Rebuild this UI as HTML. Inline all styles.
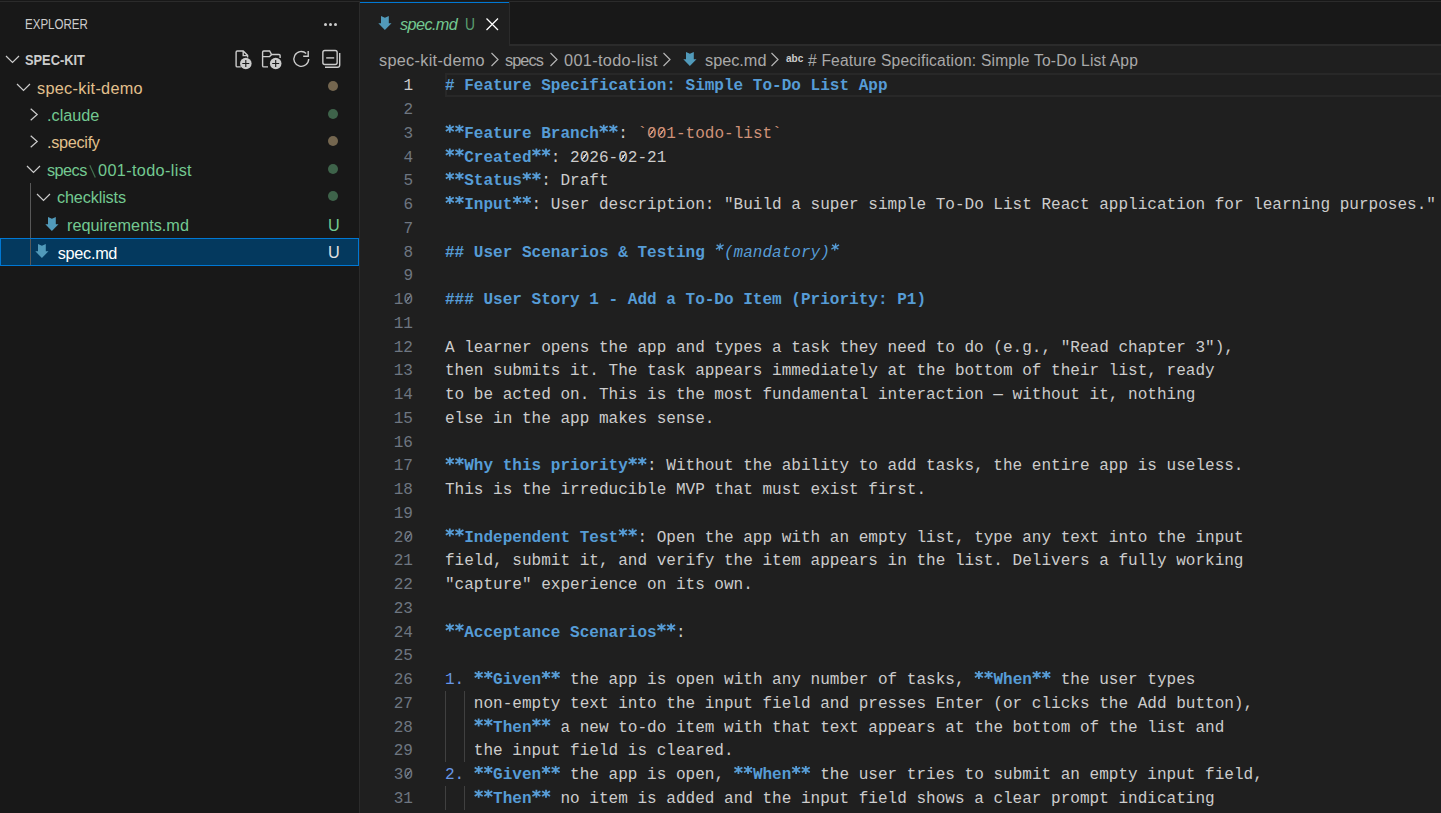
<!DOCTYPE html>
<html><head><meta charset="utf-8">
<style>
*{box-sizing:border-box}
html,body{margin:0;padding:0;width:1441px;height:813px;overflow:hidden;background:#181818}
body{position:relative;font-family:"Liberation Sans",sans-serif}
.abs{position:absolute}
#topline{position:absolute;left:0;top:1px;width:1441px;height:1px;background:#2b2b2b}
#sidebar{position:absolute;left:0;top:2px;width:359px;height:811px;background:#181818}
#sbborder{position:absolute;left:359px;top:2px;width:1px;height:811px;background:#2b2b2b}
.ui{position:absolute;white-space:pre;font-family:"Liberation Sans",sans-serif;font-size:16.25px;line-height:20px}
#editor{position:absolute;left:360px;top:46px;width:1081px;height:767px;background:#1f1f1f}
#tabbar{position:absolute;left:360px;top:2px;width:1081px;height:44px;background:#181818}
#tabbarborder{position:absolute;left:360px;top:44px;width:1081px;height:2px;background:#2b2b2b}
#tab{position:absolute;left:360px;top:1px;width:149px;height:45px;background:#1f1f1f}
#tabtop{position:absolute;left:360px;top:2px;width:149px;height:1px;background:#0078d4}
#tabright{position:absolute;left:509px;top:1px;width:1px;height:45px;background:#2b2b2b}
.cl,.ln{position:absolute;white-space:pre;font-family:"Liberation Mono",monospace;font-size:16.05px;line-height:23.75px;height:23.75px}
.cl{left:445px;color:#cccccc}
.ln{left:363px;width:50px;text-align:right;color:#6e7681}
.ln.act{color:#cccccc}
.h{color:#569cd6;font-weight:bold}
.b{color:#569cd6;font-weight:bold}
.i{color:#569cd6;font-style:italic}
.c{color:#ce9178}
.n{color:#6796e6}
.t{color:#cccccc}
.ig{position:absolute;width:1px;background:#404040}
.z{background:linear-gradient(to bottom right,transparent 42%,currentColor 42%,currentColor 58%,transparent 58%) no-repeat;background-size:5px 7px;background-position:2.4px 4.4px}
</style></head><body>
<div id="topline"></div>
<div id="sidebar"></div>
<div id="sbborder"></div>

<!-- explorer header -->
<div class="ui" style="left:25px;top:15px;font-size:13.75px;transform:scaleX(0.84);transform-origin:0 0;color:#cccccc">EXPLORER</div>
<div class="abs" style="left:323.9px;top:22.5px;width:3px;height:3px;border-radius:2px;background:#cccccc"></div>
<div class="abs" style="left:329px;top:22.5px;width:3px;height:3px;border-radius:2px;background:#cccccc"></div>
<div class="abs" style="left:333.9px;top:22.5px;width:3px;height:3px;border-radius:2px;background:#cccccc"></div>

<!-- section header -->
<svg class="abs" style="left:5px;top:55px" width="15" height="9" viewBox="0 0 15 9"><path d="M1 1 L7.5 7.5 L14 1" fill="none" stroke="#cccccc" stroke-width="1.2"/></svg>
<div class="ui" style="left:25px;top:50px;font-size:14px;transform:scaleX(0.915);transform-origin:0 0;font-weight:bold;color:#cccccc">SPEC-KIT</div>

<!-- action icons -->
<svg class="abs" style="left:225px;top:40px" width="125" height="40" viewBox="225 40 125 40" fill="none" stroke="#cccccc" stroke-width="1.4">
 <path d="M240.8 66.9 H237.3 Q236.1 66.9 236.1 65.7 V52.2 Q236.1 51 237.3 51 H243.2 L247.6 55.4 V57.6"/>
 <path d="M243.2 51 V55.6 H247.6"/>
 <circle cx="245.8" cy="63.5" r="5.8" fill="#cccccc" stroke="none"/>
 <path d="M242.3 63.5 H249.3 M245.8 60 V67" stroke="#181818" stroke-width="1.1"/>
 <path d="M268 66.9 H263.8 Q262.6 66.9 262.6 65.7 V52.2 Q262.6 51 263.8 51 H269.6 L271.6 54.5 H279 Q280.1 54.5 280.1 55.6 V58"/>
 <path d="M262.6 56.6 H269.6 L271.6 54.5"/>
 <circle cx="275.7" cy="63.5" r="5.8" fill="#cccccc" stroke="none"/>
 <path d="M272.2 63.5 H279.2 M275.7 60 V67" stroke="#181818" stroke-width="1.1"/>
 <path d="M308.7 59 A7.4 7.4 0 1 1 306.2 53.4" stroke-width="1.4"/>
 <path d="M308.2 51 V56.3 H303.2" stroke-width="1.4"/>
 <rect x="322.85" y="50.55" width="14.3" height="13.9" rx="2" stroke-width="1.4"/>
 <path d="M325 67.2 H337.5 Q339.7 67.2 339.7 65 V53" stroke-width="1.4"/>
 <path d="M326.2 57.9 H334.2" stroke-width="1.4"/>
</svg>

<!-- tree -->
<!-- row: spec-kit-demo -->
<svg class="abs" style="left:16px;top:83px" width="15" height="9" viewBox="0 0 15 9"><path d="M1 1 L7.5 7.5 L14 1" fill="none" stroke="#cccccc" stroke-width="1.2"/></svg>
<div class="ui" style="left:37px;top:78px;letter-spacing:0.3px;color:#e2c08d">spec-kit-demo</div>
<div class="abs" style="left:327.5px;top:81.10px;width:10px;height:10px;border-radius:50%;background:#74664f"></div>
<!-- .claude -->
<svg class="abs" style="left:29.2px;top:106.5px" width="10" height="15" viewBox="0 0 10 15"><path d="M1.7 1.7 L8.2 7.5 L1.7 13.3" fill="none" stroke="#cccccc" stroke-width="1.2"/></svg>
<div class="ui" style="left:47px;top:105px;color:#73c991">.claude</div>
<div class="abs" style="left:327.5px;top:108.65px;width:10px;height:10px;border-radius:50%;background:#3e634a"></div>
<!-- .specify -->
<svg class="abs" style="left:29.2px;top:134px" width="10" height="15" viewBox="0 0 10 15"><path d="M1.7 1.7 L8.2 7.5 L1.7 13.3" fill="none" stroke="#cccccc" stroke-width="1.2"/></svg>
<div class="ui" style="left:47px;top:132px;letter-spacing:-0.3px;color:#e2c08d">.specify</div>
<div class="abs" style="left:327.5px;top:136.20px;width:10px;height:10px;border-radius:50%;background:#74664f"></div>
<!-- specs\001-todo-list -->
<svg class="abs" style="left:26px;top:165px" width="15" height="9" viewBox="0 0 15 9"><path d="M1 1 L7.5 7.5 L14 1" fill="none" stroke="#cccccc" stroke-width="1.2"/></svg>
<div class="ui" style="left:47px;top:160px;letter-spacing:-0.55px;color:#73c991">specs</div>
<svg class="abs" style="left:85px;top:160px" width="15" height="22" viewBox="85 160 15 22"><path d="M89.8 165.3 L95.3 177.4" stroke="#437150" stroke-width="1.2"/></svg>
<div class="ui" style="left:98px;top:160px;letter-spacing:0.35px;color:#73c991">001-todo-list</div>
<div class="abs" style="left:327.5px;top:163.75px;width:10px;height:10px;border-radius:50%;background:#3e634a"></div>
<!-- indent guide -->
<div class="abs" style="left:30px;top:183px;width:1px;height:83px;background:#585858"></div>
<!-- checklists -->
<svg class="abs" style="left:36px;top:193px" width="15" height="9" viewBox="0 0 15 9"><path d="M1 1 L7.5 7.5 L14 1" fill="none" stroke="#cccccc" stroke-width="1.2"/></svg>
<div class="ui" style="left:57px;top:187px;letter-spacing:-0.15px;color:#73c991">checklists</div>
<div class="abs" style="left:327.5px;top:191.30px;width:10px;height:10px;border-radius:50%;background:#3e634a"></div>
<!-- requirements.md -->
<svg class="abs" style="left:45px;top:217px" width="14" height="15" viewBox="0 0 14 15"><path d="M3 0 L6.9 1.8 L10.8 0 L10.8 7.3 L13.5 7.3 L6.9 14 L0.3 7.3 L3 7.3 Z" fill="#519aba"/></svg>
<div class="ui" style="left:67px;top:215px;color:#73c991">requirements.md</div>
<div class="ui" style="left:328px;top:215px;color:#73c991">U</div>
<!-- spec.md selected -->
<div class="abs" style="left:0;top:238px;width:359px;height:28px;background:#04395e;border:1px solid #0078d4"></div>
<div class="abs" style="left:30px;top:239px;width:1px;height:26px;background:#585858"></div>
<svg class="abs" style="left:35px;top:244px" width="14" height="15" viewBox="0 0 14 15"><path d="M3 0 L6.9 1.8 L10.8 0 L10.8 7.3 L13.5 7.3 L6.9 14 L0.3 7.3 L3 7.3 Z" fill="#519aba"/></svg>
<div class="ui" style="left:57.8px;top:243px;letter-spacing:-0.3px;color:#ffffff">spec.md</div>
<div class="ui" style="left:328px;top:242px;color:#e0e0e0">U</div>

<!-- tab bar -->
<div id="tabbar"></div>
<div id="tabbarborder"></div>
<div id="tab"></div>
<div id="tabtop"></div>
<div id="tabright"></div>
<svg class="abs" style="left:377.6px;top:16px" width="14" height="15" viewBox="0 0 14 15"><path d="M3 0 L6.9 1.8 L10.8 0 L10.8 7.3 L13.5 7.3 L6.9 14 L0.3 7.3 L3 7.3 Z" fill="#519aba"/></svg>
<div class="ui" style="left:400px;top:14px;letter-spacing:-0.6px;color:#73c991;font-style:italic">spec.md</div>
<div class="ui" style="left:465px;top:14px;transform:scaleX(0.85);transform-origin:0 0;color:#5a9e70">U</div>
<svg class="abs" style="left:485px;top:17px" width="15" height="15" viewBox="0 0 15 15"><path d="M1.5 1.5 L13 13 M13 1.5 L1.5 13" stroke="#ffffff" stroke-width="1.25"/></svg>

<!-- editor -->
<div id="editor"></div>
<!-- breadcrumbs -->
<div class="ui" style="left:379px;top:50px;letter-spacing:0.3px;color:#a9a9a9">spec-kit-demo</div>
<svg class="abs" style="left:489.8px;top:52px" width="10" height="15" viewBox="0 0 10 15"><path d="M1.5 1 L8 7.5 L1.5 14" fill="none" stroke="#b5b5b5" stroke-width="1.2"/></svg>
<div class="ui" style="left:505px;top:50px;letter-spacing:-0.9px;color:#a9a9a9">specs</div>
<svg class="abs" style="left:548.8px;top:52px" width="10" height="15" viewBox="0 0 10 15"><path d="M1.5 1 L8 7.5 L1.5 14" fill="none" stroke="#b5b5b5" stroke-width="1.2"/></svg>
<div class="ui" style="left:564px;top:50px;letter-spacing:0.35px;color:#a9a9a9">001-todo-list</div>
<svg class="abs" style="left:661.8px;top:52px" width="10" height="15" viewBox="0 0 10 15"><path d="M1.5 1 L8 7.5 L1.5 14" fill="none" stroke="#b5b5b5" stroke-width="1.2"/></svg>
<svg class="abs" style="left:683px;top:52px" width="14" height="15" viewBox="0 0 14 15"><path d="M3 0 L6.9 1.8 L10.8 0 L10.8 7.3 L13.5 7.3 L6.9 14 L0.3 7.3 L3 7.3 Z" fill="#519aba"/></svg>
<div class="ui" style="left:705px;top:50px;color:#a9a9a9">spec.md</div>
<svg class="abs" style="left:769.8px;top:52px" width="10" height="15" viewBox="0 0 10 15"><path d="M1.5 1 L8 7.5 L1.5 14" fill="none" stroke="#b5b5b5" stroke-width="1.2"/></svg>
<div class="ui" style="left:786px;top:49px;font-size:10px;font-weight:bold;color:#cccccc">abc</div>
<div class="ui" style="left:808px;top:50.5px;font-size:15.6px;letter-spacing:0.19px;color:#a9a9a9"># Feature Specification: Simple To-Do List App</div>

<!-- current line box -->
<div class="abs" style="left:445px;top:73px;width:996px;height:24px;border:2px solid #282828;border-right:none"></div>

<div class="ig" style="left:445px;top:690.75px;height:71.25px"></div>
<div class="ig" style="left:464.24px;top:690.75px;height:71.25px"></div>
<div class="ig" style="left:445px;top:785.75px;height:23.75px"></div>
<div class="ig" style="left:464.24px;top:785.75px;height:23.75px"></div>
<div class="ln act" style="top:75.25px">1</div>
<div class="cl" style="top:75.25px"><span class="h"># Feature Specification: Simple To-Do List App</span></div>
<div class="ln" style="top:99.00px">2</div>
<div class="ln" style="top:122.75px">3</div>
<div class="cl" style="top:122.75px"><span class="b">  Feature Branch  </span><span class="t">: </span><span class="c">`<span class=z>0</span><span class=z>0</span>1-todo-list`</span></div>
<div class="ln" style="top:146.50px">4</div>
<div class="cl" style="top:146.50px"><span class="b">  Created  </span><span class="t">: 2<span class=z>0</span>26-<span class=z>0</span>2-21</span></div>
<div class="ln" style="top:170.25px">5</div>
<div class="cl" style="top:170.25px"><span class="b">  Status  </span><span class="t">: Draft</span></div>
<div class="ln" style="top:194.00px">6</div>
<div class="cl" style="top:194.00px"><span class="b">  Input  </span><span class="t">: User description: "Build a super simple To-Do List React application for learning purposes."</span></div>
<div class="ln" style="top:217.75px">7</div>
<div class="ln" style="top:241.50px">8</div>
<div class="cl" style="top:241.50px"><span class="h">## User Scenarios &amp; Testing </span><span class="i"> (mandatory) </span></div>
<div class="ln" style="top:265.25px">9</div>
<div class="ln" style="top:289.00px">1<span class=z>0</span></div>
<div class="cl" style="top:289.00px"><span class="h">### User Story 1 - Add a To-Do Item (Priority: P1)</span></div>
<div class="ln" style="top:312.75px">11</div>
<div class="ln" style="top:336.50px">12</div>
<div class="cl" style="top:336.50px"><span class="t">A learner opens the app and types a task they need to do (e.g., "Read chapter 3"),</span></div>
<div class="ln" style="top:360.25px">13</div>
<div class="cl" style="top:360.25px"><span class="t">then submits it. The task appears immediately at the bottom of their list, ready</span></div>
<div class="ln" style="top:384.00px">14</div>
<div class="cl" style="top:384.00px"><span class="t">to be acted on. This is the most fundamental interaction — without it, nothing</span></div>
<div class="ln" style="top:407.75px">15</div>
<div class="cl" style="top:407.75px"><span class="t">else in the app makes sense.</span></div>
<div class="ln" style="top:431.50px">16</div>
<div class="ln" style="top:455.25px">17</div>
<div class="cl" style="top:455.25px"><span class="b">  Why this priority  </span><span class="t">: Without the ability to add tasks, the entire app is useless.</span></div>
<div class="ln" style="top:479.00px">18</div>
<div class="cl" style="top:479.00px"><span class="t">This is the irreducible MVP that must exist first.</span></div>
<div class="ln" style="top:502.75px">19</div>
<div class="ln" style="top:526.50px">2<span class=z>0</span></div>
<div class="cl" style="top:526.50px"><span class="b">  Independent Test  </span><span class="t">: Open the app with an empty list, type any text into the input</span></div>
<div class="ln" style="top:550.25px">21</div>
<div class="cl" style="top:550.25px"><span class="t">field, submit it, and verify the item appears in the list. Delivers a fully working</span></div>
<div class="ln" style="top:574.00px">22</div>
<div class="cl" style="top:574.00px"><span class="t">"capture" experience on its own.</span></div>
<div class="ln" style="top:597.75px">23</div>
<div class="ln" style="top:621.50px">24</div>
<div class="cl" style="top:621.50px"><span class="b">  Acceptance Scenarios  </span><span class="t">:</span></div>
<div class="ln" style="top:645.25px">25</div>
<div class="ln" style="top:669.00px">26</div>
<div class="cl" style="top:669.00px"><span class="n">1. </span><span class="b">  Given  </span><span class="t"> the app is open with any number of tasks, </span><span class="b">  When  </span><span class="t"> the user types</span></div>
<div class="ln" style="top:692.75px">27</div>
<div class="cl" style="top:692.75px"><span class="t">   non-empty text into the input field and presses Enter (or clicks the Add button),</span></div>
<div class="ln" style="top:716.50px">28</div>
<div class="cl" style="top:716.50px"><span class="t">   </span><span class="b">  Then  </span><span class="t"> a new to-do item with that text appears at the bottom of the list and</span></div>
<div class="ln" style="top:740.25px">29</div>
<div class="cl" style="top:740.25px"><span class="t">   the input field is cleared.</span></div>
<div class="ln" style="top:764.00px">3<span class=z>0</span></div>
<div class="cl" style="top:764.00px"><span class="n">2. </span><span class="b">  Given  </span><span class="t"> the app is open, </span><span class="b">  When  </span><span class="t"> the user tries to submit an empty input field,</span></div>
<div class="ln" style="top:787.75px">31</div>
<div class="cl" style="top:787.75px"><span class="t">   </span><span class="b">  Then  </span><span class="t"> no item is added and the input field shows a clear prompt indicating</span></div>
<svg class="abs" style="left:0;top:0" width="1441" height="813" viewBox="0 0 1441 813" fill="none" stroke-linecap="butt">
<path d="M449.81 124.65 L449.81 132.65 M445.81 126.25 L453.81 131.05 M453.81 126.25 L445.81 131.05" stroke="#569cd6" stroke-width="1.8"/>
<path d="M459.43 124.65 L459.43 132.65 M455.43 126.25 L463.43 131.05 M463.43 126.25 L455.43 131.05" stroke="#569cd6" stroke-width="1.8"/>
<path d="M603.73 124.65 L603.73 132.65 M599.73 126.25 L607.73 131.05 M607.73 126.25 L599.73 131.05" stroke="#569cd6" stroke-width="1.8"/>
<path d="M613.35 124.65 L613.35 132.65 M609.35 126.25 L617.35 131.05 M617.35 126.25 L609.35 131.05" stroke="#569cd6" stroke-width="1.8"/>
<path d="M449.81 148.40 L449.81 156.40 M445.81 150.00 L453.81 154.80 M453.81 150.00 L445.81 154.80" stroke="#569cd6" stroke-width="1.8"/>
<path d="M459.43 148.40 L459.43 156.40 M455.43 150.00 L463.43 154.80 M463.43 150.00 L455.43 154.80" stroke="#569cd6" stroke-width="1.8"/>
<path d="M536.39 148.40 L536.39 156.40 M532.39 150.00 L540.39 154.80 M540.39 150.00 L532.39 154.80" stroke="#569cd6" stroke-width="1.8"/>
<path d="M546.01 148.40 L546.01 156.40 M542.01 150.00 L550.01 154.80 M550.01 150.00 L542.01 154.80" stroke="#569cd6" stroke-width="1.8"/>
<path d="M449.81 172.15 L449.81 180.15 M445.81 173.75 L453.81 178.55 M453.81 173.75 L445.81 178.55" stroke="#569cd6" stroke-width="1.8"/>
<path d="M459.43 172.15 L459.43 180.15 M455.43 173.75 L463.43 178.55 M463.43 173.75 L455.43 178.55" stroke="#569cd6" stroke-width="1.8"/>
<path d="M526.77 172.15 L526.77 180.15 M522.77 173.75 L530.77 178.55 M530.77 173.75 L522.77 178.55" stroke="#569cd6" stroke-width="1.8"/>
<path d="M536.39 172.15 L536.39 180.15 M532.39 173.75 L540.39 178.55 M540.39 173.75 L532.39 178.55" stroke="#569cd6" stroke-width="1.8"/>
<path d="M449.81 195.90 L449.81 203.90 M445.81 197.50 L453.81 202.30 M453.81 197.50 L445.81 202.30" stroke="#569cd6" stroke-width="1.8"/>
<path d="M459.43 195.90 L459.43 203.90 M455.43 197.50 L463.43 202.30 M463.43 197.50 L455.43 202.30" stroke="#569cd6" stroke-width="1.8"/>
<path d="M517.15 195.90 L517.15 203.90 M513.15 197.50 L521.15 202.30 M521.15 197.50 L513.15 202.30" stroke="#569cd6" stroke-width="1.8"/>
<path d="M526.77 195.90 L526.77 203.90 M522.77 197.50 L530.77 202.30 M530.77 197.50 L522.77 202.30" stroke="#569cd6" stroke-width="1.8"/>
<path d="M720.37 243.48 L719.17 250.52 M716.61 244.89 L722.93 249.11 M723.65 244.89 L715.89 249.11" stroke="#569cd6" stroke-width="1.25"/>
<path d="M835.81 243.48 L834.61 250.52 M832.05 244.89 L838.37 249.11 M839.09 244.89 L831.33 249.11" stroke="#569cd6" stroke-width="1.25"/>
<path d="M449.81 457.15 L449.81 465.15 M445.81 458.75 L453.81 463.55 M453.81 458.75 L445.81 463.55" stroke="#569cd6" stroke-width="1.8"/>
<path d="M459.43 457.15 L459.43 465.15 M455.43 458.75 L463.43 463.55 M463.43 458.75 L455.43 463.55" stroke="#569cd6" stroke-width="1.8"/>
<path d="M632.59 457.15 L632.59 465.15 M628.59 458.75 L636.59 463.55 M636.59 458.75 L628.59 463.55" stroke="#569cd6" stroke-width="1.8"/>
<path d="M642.21 457.15 L642.21 465.15 M638.21 458.75 L646.21 463.55 M646.21 458.75 L638.21 463.55" stroke="#569cd6" stroke-width="1.8"/>
<path d="M449.81 528.40 L449.81 536.40 M445.81 530.00 L453.81 534.80 M453.81 530.00 L445.81 534.80" stroke="#569cd6" stroke-width="1.8"/>
<path d="M459.43 528.40 L459.43 536.40 M455.43 530.00 L463.43 534.80 M463.43 530.00 L455.43 534.80" stroke="#569cd6" stroke-width="1.8"/>
<path d="M622.97 528.40 L622.97 536.40 M618.97 530.00 L626.97 534.80 M626.97 530.00 L618.97 534.80" stroke="#569cd6" stroke-width="1.8"/>
<path d="M632.59 528.40 L632.59 536.40 M628.59 530.00 L636.59 534.80 M636.59 530.00 L628.59 534.80" stroke="#569cd6" stroke-width="1.8"/>
<path d="M449.81 623.40 L449.81 631.40 M445.81 625.00 L453.81 629.80 M453.81 625.00 L445.81 629.80" stroke="#569cd6" stroke-width="1.8"/>
<path d="M459.43 623.40 L459.43 631.40 M455.43 625.00 L463.43 629.80 M463.43 625.00 L455.43 629.80" stroke="#569cd6" stroke-width="1.8"/>
<path d="M661.45 623.40 L661.45 631.40 M657.45 625.00 L665.45 629.80 M665.45 625.00 L657.45 629.80" stroke="#569cd6" stroke-width="1.8"/>
<path d="M671.07 623.40 L671.07 631.40 M667.07 625.00 L675.07 629.80 M675.07 625.00 L667.07 629.80" stroke="#569cd6" stroke-width="1.8"/>
<path d="M478.67 670.90 L478.67 678.90 M474.67 672.50 L482.67 677.30 M482.67 672.50 L474.67 677.30" stroke="#569cd6" stroke-width="1.8"/>
<path d="M488.29 670.90 L488.29 678.90 M484.29 672.50 L492.29 677.30 M492.29 672.50 L484.29 677.30" stroke="#569cd6" stroke-width="1.8"/>
<path d="M546.01 670.90 L546.01 678.90 M542.01 672.50 L550.01 677.30 M550.01 672.50 L542.01 677.30" stroke="#569cd6" stroke-width="1.8"/>
<path d="M555.63 670.90 L555.63 678.90 M551.63 672.50 L559.63 677.30 M559.63 672.50 L551.63 677.30" stroke="#569cd6" stroke-width="1.8"/>
<path d="M978.91 670.90 L978.91 678.90 M974.91 672.50 L982.91 677.30 M982.91 672.50 L974.91 677.30" stroke="#569cd6" stroke-width="1.8"/>
<path d="M988.53 670.90 L988.53 678.90 M984.53 672.50 L992.53 677.30 M992.53 672.50 L984.53 677.30" stroke="#569cd6" stroke-width="1.8"/>
<path d="M1036.63 670.90 L1036.63 678.90 M1032.63 672.50 L1040.63 677.30 M1040.63 672.50 L1032.63 677.30" stroke="#569cd6" stroke-width="1.8"/>
<path d="M1046.25 670.90 L1046.25 678.90 M1042.25 672.50 L1050.25 677.30 M1050.25 672.50 L1042.25 677.30" stroke="#569cd6" stroke-width="1.8"/>
<path d="M478.67 718.40 L478.67 726.40 M474.67 720.00 L482.67 724.80 M482.67 720.00 L474.67 724.80" stroke="#569cd6" stroke-width="1.8"/>
<path d="M488.29 718.40 L488.29 726.40 M484.29 720.00 L492.29 724.80 M492.29 720.00 L484.29 724.80" stroke="#569cd6" stroke-width="1.8"/>
<path d="M536.39 718.40 L536.39 726.40 M532.39 720.00 L540.39 724.80 M540.39 720.00 L532.39 724.80" stroke="#569cd6" stroke-width="1.8"/>
<path d="M546.01 718.40 L546.01 726.40 M542.01 720.00 L550.01 724.80 M550.01 720.00 L542.01 724.80" stroke="#569cd6" stroke-width="1.8"/>
<path d="M478.67 765.90 L478.67 773.90 M474.67 767.50 L482.67 772.30 M482.67 767.50 L474.67 772.30" stroke="#569cd6" stroke-width="1.8"/>
<path d="M488.29 765.90 L488.29 773.90 M484.29 767.50 L492.29 772.30 M492.29 767.50 L484.29 772.30" stroke="#569cd6" stroke-width="1.8"/>
<path d="M546.01 765.90 L546.01 773.90 M542.01 767.50 L550.01 772.30 M550.01 767.50 L542.01 772.30" stroke="#569cd6" stroke-width="1.8"/>
<path d="M555.63 765.90 L555.63 773.90 M551.63 767.50 L559.63 772.30 M559.63 767.50 L551.63 772.30" stroke="#569cd6" stroke-width="1.8"/>
<path d="M738.41 765.90 L738.41 773.90 M734.41 767.50 L742.41 772.30 M742.41 767.50 L734.41 772.30" stroke="#569cd6" stroke-width="1.8"/>
<path d="M748.03 765.90 L748.03 773.90 M744.03 767.50 L752.03 772.30 M752.03 767.50 L744.03 772.30" stroke="#569cd6" stroke-width="1.8"/>
<path d="M796.13 765.90 L796.13 773.90 M792.13 767.50 L800.13 772.30 M800.13 767.50 L792.13 772.30" stroke="#569cd6" stroke-width="1.8"/>
<path d="M805.75 765.90 L805.75 773.90 M801.75 767.50 L809.75 772.30 M809.75 767.50 L801.75 772.30" stroke="#569cd6" stroke-width="1.8"/>
<path d="M478.67 789.65 L478.67 797.65 M474.67 791.25 L482.67 796.05 M482.67 791.25 L474.67 796.05" stroke="#569cd6" stroke-width="1.8"/>
<path d="M488.29 789.65 L488.29 797.65 M484.29 791.25 L492.29 796.05 M492.29 791.25 L484.29 796.05" stroke="#569cd6" stroke-width="1.8"/>
<path d="M536.39 789.65 L536.39 797.65 M532.39 791.25 L540.39 796.05 M540.39 791.25 L532.39 796.05" stroke="#569cd6" stroke-width="1.8"/>
<path d="M546.01 789.65 L546.01 797.65 M542.01 791.25 L550.01 796.05 M550.01 791.25 L542.01 796.05" stroke="#569cd6" stroke-width="1.8"/>
</svg>
</body></html>
